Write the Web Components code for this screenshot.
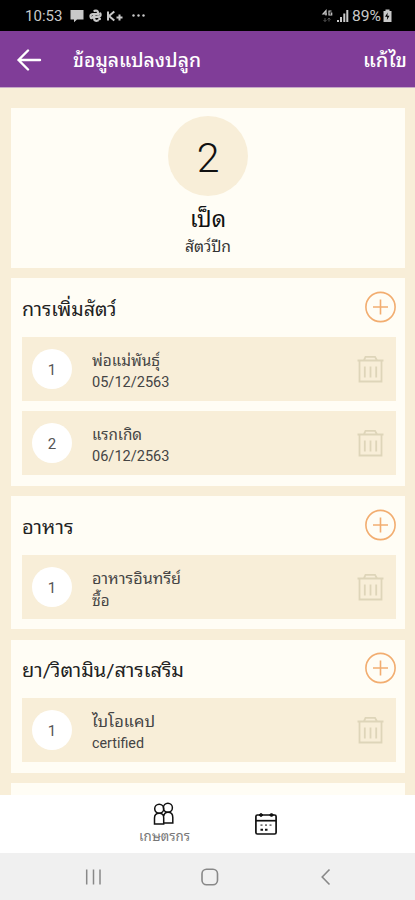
<!DOCTYPE html>
<html lang="th">
<head>
<meta charset="utf-8">
<title>ข้อมูลแปลงปลูก</title>
<style>
body{margin:0;--cream:#f8eed8;background:var(--cream);font-family:Roboto,"Noto Sans Thai Looped","Noto Looped Thai",Loma,Waree,Garuda,"Noto Sans Thai","Noto Sans",sans-serif;color:#222}
</style>
</head>
<body>
<farm-app></farm-app>
<script>
const define=(name,html,init)=>customElements.define(name,class extends HTMLElement{
  constructor(){
    super();
    const t=document.createElement('template');
    t.innerHTML=html;
    this.attachShadow({mode:'open'}).append(t.content.cloneNode(true));
  }
  connectedCallback(){ if(init) init(this,this.shadowRoot); }
});

/* Single line of text, sized by "size" and stretched to "width". */
define('text-line',`<style>
:host{display:block;flex:none;white-space:nowrap;overflow:visible}
span{display:inline-block;transform-origin:0 50%;line-height:inherit}
</style><span><slot></slot></span>`,(el,root)=>{
  const s=root.querySelector('span'), w=+el.getAttribute('width');
  el.style.fontSize=el.getAttribute('size')+'px';
  el.style.width=w+'px';
  const n=s.offsetWidth;
  if(n) s.style.transform='scaleX('+(w/s.getBoundingClientRect().width)+')';
});

define('status-bar',`<style>
:host{display:flex;height:31px;background:#000;color:#c9c9c9;align-items:center;box-sizing:border-box;padding:1px 22px 0 25px}
svg{display:block;flex:none}
.gap{flex:1}
text-line{line-height:20px}
</style>
<text-line size="15.5" width="37.5">10:53</text-line>
<svg width="78" height="20" viewBox="62.5 6 78 20">
<path d="M70 10h13v9.500h-6.500l-3 2.700v-2.700h-3.500z" fill="#c9c9c9"/>
<g fill="none" stroke="#c9c9c9" stroke-width="2.300" stroke-linecap="round" stroke-linejoin="round"><path d="M94 10.800q3-1 3.500 1.700v2M99.800 13.500q1.200 3-2.300 3.300h-5M97.300 20.500q-3.300 1-3.600-1.700v-4M90.300 17.500q-1.200-3 2-3.300h4M90.500 18h1M98.800 19h.6"/></g>
<g fill="none" stroke="#c9c9c9" stroke-width="2"><path d="M107.500 11.500v9M113.800 11.500l-5.300 4.500 5.300 4.500M116 17.400h6M119 14.600v5.800"/></g>
<g fill="#c9c9c9"><circle cx="133" cy="15.500" r="1.200"/><circle cx="138" cy="15.500" r="1.200"/></g>
</svg>
<svg width="8" height="20" viewBox="140.500 6 8 20"><circle cx="143" cy="15.500" r="1.200" fill="#c9c9c9"/></svg>
<span class="gap"></span>
<svg width="31" height="20" viewBox="320 6 31 20">
<g fill="none" stroke="#c9c9c9" stroke-width="1.200"><path d="M325 15.500v-5l-3 3.500h4M330.500 11h-2.500v4h2.700v-2h-1.300"/></g>
<path d="M324 18v3.500m-1.500-1.500 1.500 1.500 1.500-1.500M328 21.500v-3.500m-1.500 1.500 1.500-1.500 1.500 1.500" stroke="#555" fill="none"/>
<path d="M337 22v-2M340 22v-5M343.300 22v-8.500M346.300 22V10" stroke="#c9c9c9" stroke-width="2"/>
</svg>
<text-line size="15.5" width="29">89%</text-line>
<svg width="12" height="20" viewBox="381.500 6 12 20"><path d="M384 11h2v-1.500h4V11h2v11h-8z" fill="#c9c9c9"/><path d="M388.200 12.500l-2.700 4.200h2.200l-.3 3.300 2.600-4.200h-2.100z" fill="#000"/></svg>`);

define('title-bar',`<style>
:host{display:flex;height:56.500px;background:#803d98;color:#fff;align-items:center;padding:0 8px 0 17px;border-bottom:1px solid #c7a9c7;box-sizing:border-box;font-weight:500}
svg{margin:2px 31px 0 0}
.gap{flex:1}
text-line{line-height:30px;padding-top:5px}
</style>
<svg width="25" height="24" viewBox="17 48 25 24" fill="none" stroke="#fff" stroke-width="2.400" stroke-linecap="round" stroke-linejoin="round"><path d="M40 60H18.500M28 50.500L18.500 60l9.500 9.500"/></svg>
<text-line size="19.5" width="128">ข้อมูลแปลงปลูก</text-line><span class="gap"></span><text-line size="19.5" width="44">แก้ไข</text-line>`);

define('animal-summary',`<style>
:host{display:flex;flex-direction:column;align-items:center;height:160px;box-sizing:border-box;padding:8px 0 0;background:#fffdf5;color:#111}
.n{width:80px;height:80px;border-radius:50%;background:var(--cream);display:flex;align-items:center;justify-content:center;font-size:41px;font-weight:350;line-height:80px}
.n span{padding-top:4px}
.a{line-height:34px;margin-top:6px}
.b{line-height:22px;color:#333}
</style>
<div class="n"><span>2</span></div>
<text-line class="a" size="23.5" width="36">เป็ด</text-line>
<text-line class="b" size="15.5" width="46">สัตว์ปีก</text-line>`);

define('record-section',`<style>
:host{display:block;background:#fffdf5;padding:0 9px 10.500px 10.500px;box-sizing:border-box}
header{display:flex;height:58.500px;align-items:center;justify-content:space-between;box-sizing:border-box}
svg{display:block;margin-bottom:1px}
.rows{display:flex;flex-direction:column;gap:10.500px}
</style>
<header><slot name="title"></slot>
<svg width="31" height="32" viewBox="0.500 0 31 32" fill="none" stroke="#f2ad70" stroke-width="1.600"><circle cx="16" cy="16" r="14.600"/><path d="M8.500 16h15M16 8.500v15"/></svg></header>
<div class="rows"><slot></slot></div>`);

define('section-title',`<style>:host{display:block;line-height:30px;padding-top:5px;color:#222}</style><slot></slot>`);

/* Top edge of a section whose content lies below the scroll area. */
define('section-edge',`<style>:host{display:block;height:20px;background:#fffdf5}</style>`);

define('record-row',`<style>
:host{display:flex;height:64px;background:var(--cream);align-items:center;padding:0 12px 0 10.500px;box-sizing:border-box}
.n{width:40px;height:40px;border-radius:50%;background:#fff;display:flex;align-items:center;justify-content:center;font-size:15px;color:#555}
.n span{padding-top:2px}
.t{flex:1;padding:6px 0 0 20px;line-height:22px;color:#444}
svg{display:block}
</style>
<div class="n"><span><slot name="number"></slot></span></div>
<div class="t"><slot></slot></div>
<svg width="27" height="28" viewBox="0 0 27 28" fill="none" stroke="#ded5b9" stroke-width="1.800"><path d="M0.500 5.500H26.500M2.500 5.500V26.500H24.500V5.500M7 5.200L8.500 1.800H18L20 5.200M7.800 11.500v11M13.500 11.500v11M19.200 11.500v11"/></svg>`);

define('tab-bar',`<style>
:host{display:flex;height:58px;background:#fff;align-items:center;box-sizing:border-box;padding:0 137px 0 138.500px;justify-content:space-between}
.f{display:flex;flex-direction:column;align-items:center}
svg{display:block}
text-line{line-height:20px;color:#777}
</style>
<div class="f"><svg width="22" height="24" viewBox="0.500 0.500 22 24" fill="none" stroke="#111" stroke-width="1.500"><circle cx="6.700" cy="7.300" r="4.500"/><circle cx="15.400" cy="6.300" r="4.500"/><path d="M2 22.500v-6q0-4.800 4.700-4.800t4.500 4.800v6zM11.200 14.500q.8-3.700 4.200-3.700 4.900 0 4.900 5.200v5.500H11.200"/></svg>
<text-line size="13.5" width="51">เกษตรกร</text-line></div>
<svg width="24" height="24" viewBox="0 0 24 24" fill="none" stroke="#111" stroke-width="1.700"><rect x="1.900" y="3" width="20.200" height="19" rx="1.500"/><path d="M2 8.700h20"/><path d="M7 1.300v3.500M17.500 1.300v3.500M5 3h4M15.500 3h4" stroke-width="2.200"/><path d="M6.500 13.200h2M11 13.200h2M15.500 13.200h2" stroke="#777"/><path d="M6.500 17.800h2.500M11 17.800h2.500" stroke-width="2"/></svg>`);

define('system-nav',`<style>
:host{display:flex;height:47px;background:#f0f0f0;align-items:center;justify-content:space-between;padding:0 83px 0 84px;box-sizing:border-box}
svg{display:block}
.home{margin-right:4px}
</style>
<svg width="19" height="20" viewBox="0 0 19 20" stroke="#888" stroke-width="1.500"><path d="M2.700 2.500v15M9.500 2.500v15M16 2.500v15"/></svg>
<svg class="home" width="20" height="20" viewBox="0 0 20 20" fill="none" stroke="#888" stroke-width="1.600"><rect x="2" y="2.200" width="15.500" height="15.500" rx="4.500"/></svg>
<svg width="12" height="20" viewBox="0 0 12 20" fill="none" stroke="#888" stroke-width="1.600"><path d="M9.500 2.500L2.200 10l7.300 7.500"/></svg>`);

define('farm-app',`<style>
:host{display:flex;flex-direction:column;width:415px;height:900px;overflow:hidden;background:var(--cream)}
main{flex:1;min-height:0;overflow:hidden;display:flex;flex-direction:column;gap:10.400px;padding:20.500px 10px 0 11px}
main>*{flex:none}
</style>
<status-bar></status-bar><title-bar></title-bar>
<main>
<animal-summary></animal-summary>
<record-section>
<section-title slot="title"><text-line size="19" width="94.500">การเพิ่มสัตว์</text-line></section-title>
<record-row><span slot="number">1</span><text-line size="15" width="68">พ่อแม่พันธุ์</text-line><text-line size="14.500" width="77.500">05/12/2563</text-line></record-row>
<record-row><span slot="number">2</span><text-line size="15" width="50">แรกเกิด</text-line><text-line size="14.500" width="77.500">06/12/2563</text-line></record-row>
</record-section>
<record-section>
<section-title slot="title"><text-line size="19" width="51.500">อาหาร</text-line></section-title>
<record-row><span slot="number">1</span><text-line size="15" width="89">อาหารอินทรีย์</text-line><text-line size="15" width="17.500">ซื้อ</text-line></record-row>
</record-section>
<record-section>
<section-title slot="title"><text-line size="19" width="162">ยา/วิตามิน/สารเสริม</text-line></section-title>
<record-row><span slot="number">1</span><text-line size="15" width="63">ไบโอแคป</text-line><text-line size="14.500" width="52">certified</text-line></record-row>
</record-section>
<section-edge></section-edge>
</main>
<tab-bar></tab-bar><system-nav></system-nav>`);
</script>
</body>
</html>
